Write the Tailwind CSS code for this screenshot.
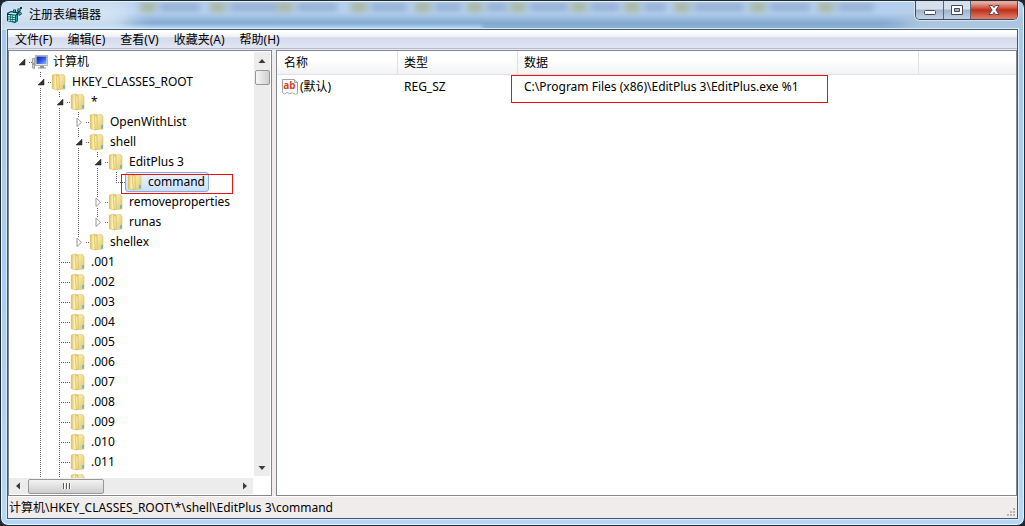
<!DOCTYPE html>
<html lang="zh-CN">
<head>
<meta charset="UTF-8">
<title>注册表编辑器</title>
<script src="https://cdn.jsdelivr.net/npm/@tailwindcss/browser@4"></script>
</head>
<body class="h-screen overflow-hidden bg-[#20252c] text-xs text-black font-['Noto_Sans','Noto_Sans_CJK_SC',sans-serif]">
<svg class="absolute w-0 h-0" aria-hidden="true">
    <defs>
    <linearGradient id="gold" x1="0" x2="1"><stop offset="0" stop-color="#dfc05a"/><stop offset=".5" stop-color="#fbf0b4"/><stop offset="1" stop-color="#e8cf70"/></linearGradient>
    <linearGradient id="cream" x1="0" x2="1" y2="1"><stop offset="0" stop-color="#fcf3c2"/><stop offset="1" stop-color="#e2c765"/></linearGradient>
    <linearGradient id="screen" x1="0" x2="1" y2="1"><stop offset="0" stop-color="#0a1fb0"/><stop offset=".5" stop-color="#2f58e0"/><stop offset="1" stop-color="#7fc2f5"/></linearGradient>
    <symbol id="folder" viewBox="0 0 16 18">
        <path d="M7 2l5.500-.5L14 3.500V16l-5 .5H7z" fill="url(#cream)" stroke="#d8c070" stroke-width=".6"/>
        <path d="M1.300 2.200 5.500 1l2.300 1v13.200L6.500 17l-5.200-1.400z" fill="url(#gold)" stroke="#d3b456" stroke-width=".6"/>
        <path d="M5.200 2.400 8 3.200V16l-1.600 1z" fill="#f7e9a2" stroke="#caa83f" stroke-width=".5"/>
        <path d="M13 12v3.500" stroke="#45aef2" stroke-width="1.400"/>
    </symbol>
    <symbol id="computer" viewBox="0 0 16 18">
        <path d="M.5 5.500 2.500 5v10.500l-2-.5z" fill="#d5d9d5" stroke="#7e8780" stroke-width=".7"/>
        <path d="M1.400 10v2" stroke="#4bbf3f"/>
        <rect x="3.500" y="2.500" width="12" height="10" fill="#e7e7e2" stroke="#a5a8ab" stroke-width=".8"/>
        <path d="M4.500 3.500h10v7.500h-10z" fill="url(#screen)"/>
        <path d="M8 13h4v1.500h2v1H6v-1h2z" fill="#8b9095"/>
    </symbol>
    </defs>
</svg>

<div class="h-full flex flex-col relative overflow-hidden rounded-lg border border-[#1f2a38] bg-[#b3d3f3] bg-linear-to-b from-[#a8c8ea] via-[#a9cdf0] to-[#b5d7f8] pl-1.5 pr-1.5 pb-1.5 shadow-[inset_0_0_0_1px_#e8f4ff]">
    <div id="glass" class="absolute inset-x-px top-px h-7 overflow-hidden bg-linear-to-b from-[#b5d0f0] from-40% via-[#84a9d0] via-75% to-[#8db1d6]" aria-hidden="true">
    <div class="absolute left-0 -bottom-1 w-[480px] h-2 bg-[#b9dbfa] blur-[2px]"></div>
    <div class="absolute -left-4 top-0 w-36 h-8 bg-[#dbe8f5] blur-md"></div>
    <div class="absolute -right-6 top-2 w-36 h-8 bg-[#b5cbe2] blur-md"></div>
    </div>

    <header class="relative h-7 flex items-center justify-between">
    <h1 class="flex items-center gap-1.5">
        <svg class="w-4 h-4" viewBox="0 0 16 16" aria-hidden="true">
        <path d="M0 6 4 4l7 1v9l-3 2-8-2z" fill="#063b40"/>
        <path d="M1 6.800l3-1.500 6 1L8.500 7.800z" fill="#a5f6f2"/>
        <path d="M1 8h2v1.500H1zm2.500.2h2v1.500h-2zM6 8.400h2V10H6zM1 10.300h2v1.500H1zm2.500.2h2V12h-2zm2.500.2h2v1.500H6zM1 12.500h2V14H1zm2.500.3h2v1.500h-2zm2.500.2h2v1.600H6z" fill="#8ff5ee"/>
        <path d="M8.700 8.600 10.300 8v6l-1.600 1z" fill="#19a6a9"/>
        <path d="M6 2.500h3v3H6zM10 3l2-2 2 2-1 2-2 1zM11 6l3-1 1 2-3 2zM13 0h2v2h-2z" fill="#0b4247"/>
        <path d="M6.800 3.200H8v1.200H6.800zM11 3l1-1 1 1-1 1zM12 6.600l1.600-.6.4.8-1.500.8zM10 1h1v1h-1z" fill="#4edfe0"/>
        </svg>
        <span>注册表编辑器</span>
    </h1>
    <div class="self-start flex h-[19px] rounded-b-[5px] overflow-hidden border border-t-0 border-[#3e4a5c] shadow-[0_0_0_1px_#d5e5f5]">
        <button aria-label="最小化" class="w-7 flex items-center justify-center border-r border-[#56657a] bg-linear-to-b from-[#d5e0ec] from-45% via-[#9fb3c9] via-50% to-[#c2d4e6]">
        <svg class="w-3 h-[13px]" viewBox="0 0 12 13"><rect x=".5" y="6.500" width="11" height="4" rx="1" fill="#fff" stroke="#454b5c"/></svg>
        </button>
        <button aria-label="最大化" class="w-[27px] flex items-center justify-center border-r border-[#56657a] bg-linear-to-b from-[#d5e0ec] from-45% via-[#9fb3c9] via-50% to-[#c2d4e6]">
        <svg class="w-3 h-3" viewBox="0 0 12 12"><path d="M.5 1.500h11v9H.5z" fill="#fff" stroke="#454b5c"/><path d="M3.500 4.500h5v3h-5z" fill="#9bb3cf" stroke="#454b5c"/></svg>
        </button>
        <button aria-label="关闭" class="w-[46px] flex items-center justify-center bg-linear-to-b from-[#e6a99d] from-10% via-[#bf2c14] via-50% to-[#e0806a]">
        <svg class="w-3 h-3" viewBox="0 0 12 12"><path d="M1 1.500h3.400L6 3.600l1.600-2.100H11L7.900 6l3.100 4.500H7.600L6 8.400l-1.600 2.100H1L4.100 6z" fill="#fff" stroke="#4d3d4c" stroke-width=".9"/></svg>
        </button>
    </div>
    </header>

    <div class="relative flex-1 min-h-0 flex flex-col border border-[#46566b] bg-[#f0ecec] shadow-[0_0_0_1px_#d8ebfc]">
    <nav class="h-5 flex items-center gap-[15px] pl-[7px] border-b border-[#e6e9f3] bg-[linear-gradient(#fff_0,#fff_10%,#eceff6_38%,#d5daeb_40%,#e1e6f5_94%,#b6bccc_95%)]">
        <button>文件(F)</button>
        <button>编辑(E)</button>
        <button>查看(V)</button>
        <button>收藏夹(A)</button>
        <button>帮助(H)</button>
    </nav>

    <main class="flex-1 min-h-0 flex gap-1">
        <section class="w-[264px] shrink-0 flex flex-col border border-[#828790] bg-white">
        <div class="flex-1 min-h-0 flex pt-px">
            <ul id="tree" role="tree" class="flex-1 min-w-0 overflow-hidden pl-1"></ul>
            <div class="w-4 mr-px mb-0.5 flex flex-col items-center bg-[#ececec]">
            <svg class="w-4 h-[18px] shrink-0" viewBox="0 0 16 18"><path d="M8 7l3.500 4h-7z" fill="#3c3c3c"/></svg>
            <div class="w-[15px] h-[15px] rounded-xs border border-[#979797] bg-linear-to-r from-[#f6f6f6] to-[#cfcfd1]"></div>
            <svg class="w-4 h-[17px] mt-auto" viewBox="0 0 16 17"><path d="M8 11 4.500 7h7z" fill="#3c3c3c"/></svg>
            </div>
        </div>
        <div class="h-4 mb-px mr-[18px] flex items-center bg-[#ececec]">
            <svg class="w-[19px] h-4" viewBox="0 0 19 16"><path d="M7 8l4-3.500v7z" fill="#3c3c3c"/></svg>
            <div class="w-[76px] h-[15px] flex items-center justify-center rounded-xs border border-[#979797] bg-linear-to-b from-[#f4f4f4] to-[#cdcdd0]">
            <svg class="w-[9px] h-2" viewBox="0 0 9 8"><path d="M1.500 1v6M4.500 1v6M7.500 1v6" stroke="#5a5a5a"/><path d="M2.500 1v6M5.500 1v6M8.500 1v6" stroke="#fff"/></svg>
            </div>
            <svg class="w-[17px] h-4 ml-auto" viewBox="0 0 17 16"><path d="M11 8 7 4.500v7z" fill="#3c3c3c"/></svg>
        </div>
        </section>

        <section class="flex-1 min-w-0 border border-[#828790] bg-white">
        <table class="w-full table-fixed border-separate border-spacing-0 text-left">
            <thead>
            <tr class="h-6 bg-linear-to-b from-white from-40% to-[#f1f2f4]">
                <th class="w-[121px] pl-[7px] pt-px font-normal border-b border-r border-[#dfe1e4]">名称</th>
                <th class="w-[120px] pl-1.5 pt-px font-normal border-b border-r border-[#dfe1e4]">类型</th>
                <th class="w-[401px] pl-1.5 pt-px font-normal border-b border-r border-[#dfe1e4]">数据</th>
                <th class="border-b border-[#dfe1e4]"></th>
            </tr>
            </thead>
            <tbody>
            <tr class="h-6">
                <td class="pl-[5px]">
                <span class="flex items-center gap-0.5">
                    <svg class="w-4 h-4 font-bold" viewBox="0 0 16 16">
                    <path d="M.5.5h12l3 3v11l-2 .8-3-1.500-2.500 1-3-1.300-2.500 1.500-2-1.500z" fill="#fff" stroke="#a3a3a3"/>
                    <path d="M12.500.5v3h3" fill="#ddd" stroke="#a3a3a3"/>
                    <text x="7.500" y="10" text-anchor="middle" font-size="10" fill="#d2451e">ab</text>
                    </svg>
                    <span>(默认)</span>
                </span>
                </td>
                <td class="pl-1.5">REG_SZ</td>
                <td class="pl-1.5 relative whitespace-nowrap">C:\Program Files (x86)\EditPlus 3\EditPlus.exe %1
                <span class="absolute -left-[7px] top-0 w-[317px] h-7 border border-[#f00f0f]"></span>
                </td>
                <td></td>
            </tr>
            </tbody>
        </table>
        </section>
    </main>

    <footer class="h-[22px] flex items-center justify-between pl-px border-t border-white">
        <span>计算机\HKEY_CLASSES_ROOT\*\shell\EditPlus 3\command</span>
        <svg class="w-3 h-3 self-end" viewBox="0 0 12 12"><path d="M8 2h2v2H8zM8 5h2v2H8zM8 8h2v2H8zM5 5h2v2H5zM5 8h2v2H5zM2 8h2v2H2z" fill="#b9b5b5"/></svg>
    </footer>
    </div>
</div>

<script>
    // one character per indent level: see cells
    const rows = [
    ['r', '计算机'],
    [' -', 'HKEY_CLASSES_ROOT'],
    [' |-', '*'],
    [' ||+', 'OpenWithList'],
    [' ||-', 'shell'],
    [' |||-', 'EditPlus 3'],
    [' ||||l', 'command'],
    [' |||+', 'removeproperties'],
    [' |||L', 'runas'],
    [' ||L', 'shellex'],
    ];
    for (let i = 1; i <= 11; i++) rows.push([' |t', '.' + String(i).padStart(3, '0')]);
    rows.push([' |t', '']);

    const dots = d => `<path d="${d}" fill="none" stroke="#606060" stroke-dasharray="1 1"/>`;
    const open = '<path d="M12 7v6H6z" fill="#333" stroke="#222" stroke-width=".5"/>';
    const closed = '<path d="M7 6v8.500l4.500-4.200z" fill="#fff" stroke="#999"/>';
    const cells = {
    ' ': '',
    '|': dots('M8.5 0v20'),
    'r': open + dots('M16 10.5h3'),
    '-': dots('M8.5 0v5') + open + dots('M8.5 16v4') + dots('M16 10.5h3'),
    '+': dots('M8.5 0v5') + closed + dots('M8.5 16v4') + dots('M16 10.5h3'),
    'L': dots('M8.5 0v5') + closed + dots('M16 10.5h3'),
    't': dots('M8.5 0v20') + dots('M10 10.5h9'),
    'l': dots('M8.5 0v10') + dots('M8 10.5h9'),
    };

    document.getElementById('tree').innerHTML = rows.map(([guide, label]) => {
    const indent = [...guide].map(c => `<svg class="w-[19px] h-5 shrink-0" viewBox="0 0 19 20">${cells[c]}</svg>`).join('');
    const icon = guide === 'r' ? 'computer' : 'folder';
    const selected = label === 'command';
    const look = selected ? 'border-[#84acdd] bg-linear-to-b from-[#eef5fe] to-[#c9dffb]' : 'border-transparent';
    const mark = selected ? '<span class="absolute -left-[5px] top-px w-28 h-5 border border-[#f00f0f]"></span>' : '';
    return `<li role="treeitem" class="flex h-5 whitespace-nowrap">${indent}
        <span class="relative -ml-0.5 pl-px pr-[3px] flex items-center gap-[5px] border rounded-[3px] ${look}">
        <svg class="w-4 h-[18px]"><use href="#${icon}"/></svg>${label}${mark}</span></li>`;
    }).join('');

    // blurred bookmark bar showing through the title bar: x of each folder, width of its caption
    const marks = [[138, 40], [208, 48], [275, 40], [349, 36], [413, 26], [465, 20], [508, 38], [569, 28], [622, 22], [672, 50], [748, 40], [816, 36]];
    document.getElementById('glass').innerHTML += marks.map(([x, w]) =>
    `<div class="absolute top-0 flex items-center gap-1 blur-[3px]" style="left:${x}px">
        <span class="w-4 h-2.5 bg-[#a9b8a0]"></span><span class="h-2 bg-[#93aed2]" style="width:${w}px"></span></div>`).join('');
</script>
</body>
</html>
